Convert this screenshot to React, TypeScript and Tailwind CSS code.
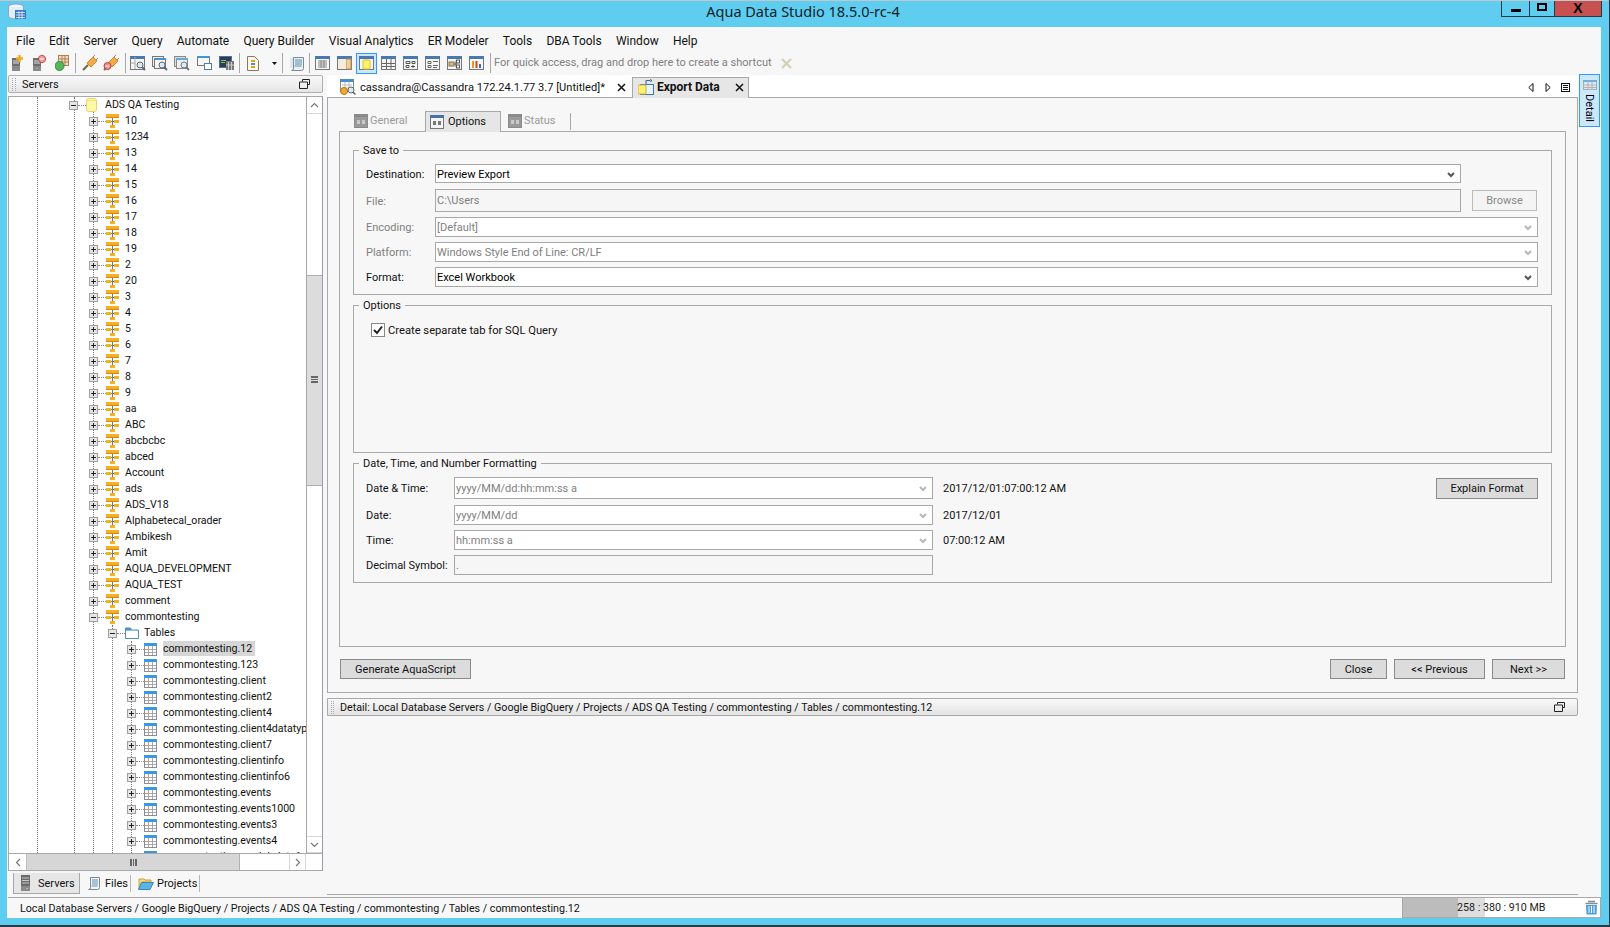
import React from "react";

const Plus = ({ minus = false }: { minus?: boolean }) => (
  <svg width="9" height="9" viewBox="0 0 9 9" className="shrink-0">
    <rect x=".5" y=".5" width="8" height="8" fill="#e6e6e6" stroke="#a0a0a0" />
    <path d="M2 4.5h5" stroke="#222" />
    {!minus && <path d="M4.5 2v5" stroke="#222" />}
  </svg>
);

const GroupIcon = () => (
  <svg width="13" height="14" viewBox="0 0 13 14" className="shrink-0">
    <rect x="0" y="0" width="13" height="4" fill="#f6b21c" />
    <rect x="0" y="3" width="13" height="1" fill="#c98c10" />
    <path d="M6.500 4v7" stroke="#777" />
    <rect x="0" y="6" width="5" height="3" fill="#f6b21c" />
    <rect x="8" y="6" width="5" height="3" fill="#f6b21c" />
    <path d="M5 7.500h3" stroke="#777" />
    <rect x="4" y="11" width="5" height="3" fill="#f6b21c" />
  </svg>
);

const TableIcon = () => (
  <svg width="13" height="13" viewBox="0 0 13 13" className="shrink-0">
    <rect x=".5" y=".5" width="12" height="12" fill="#fff" stroke="#8c8c8c" />
    <rect x="0" y="0" width="13" height="3" fill="#3d97dc" />
    <path d="M4.5 3v9M8.5 3v9M1 6.5h11M1 9.5h11" stroke="#a8a8a8" />
  </svg>
);

const DbIcon = () => (
  <svg width="11" height="14" viewBox="0 0 11 14" className="shrink-0">
    <rect x=".5" y=".5" width="10" height="13" rx="2" fill="#fffaa8" stroke="#edd06a" />
    <path d="M1 2.5h9" stroke="#f6e27a" />
  </svg>
);

const FolderIcon = () => (
  <svg width="14" height="12" viewBox="0 0 14 12" className="shrink-0">
    <path d="M.5 1h5l1 2h7v8.5H.5z" fill="#fff" stroke="#4c91c4" />
    <rect x="1" y="1" width="5" height="2" fill="#4c91c4" />
    <rect x="1" y="3" width="12" height="1" fill="#8dbcdc" />
  </svg>
);

const Chev = ({ off = false }: { off?: boolean }) => (
  <svg width="8" height="6" viewBox="0 0 8 6" className="shrink-0">
    <path d="M1 1l3 3 3-3" fill="none" stroke={off ? "#b8b8b8" : "#555"} strokeWidth="2" />
  </svg>
);

const Win = ({ c = "#4a6ea9", off = false }: { c?: string; off?: boolean }) => (
  <svg width="14" height="14" viewBox="0 0 14 14" className="shrink-0">
    <rect x=".5" y=".5" width="13" height="13" fill={off ? "#9a9a9a" : "#f4f4f4"} stroke={off ? "#8a8a8a" : "#777"} />
    <rect x="0" y="0" width="14" height="3" fill={off ? "#8a8a8a" : c} />
    <rect x="3" y="6" width="3" height="4" fill={off ? "#c8c8c8" : "#777"} />
    <rect x="8" y="6" width="3" height="4" fill={off ? "#c8c8c8" : "#777"} />
  </svg>
);

const Tb = ({ children, w = 16 }: { children: React.ReactNode; w?: number }) => (
  <svg width={w} height="16" viewBox={`0 0 ${w} 16`} className="shrink-0">{children}</svg>
);

const Server = () => (
  <>
    <rect x="0" y="3" width="8" height="13" fill="#6e6e6e" />
    <path d="M1 6h6M1 8h6" stroke="#ddd" />
    <rect x="0" y="11" width="8" height="5" fill="#8a8a8a" />
    <rect x="3" y="13" width="2" height="1" fill="#6fd06f" />
  </>
);

const Frame = ({ top = "#4a78b0" }: { top?: string }) => (
  <>
    <rect x=".5" y="1.5" width="14" height="13" fill="#f6f6f6" stroke="#777" />
    <rect x="0" y="1" width="15" height="3" fill={top} />
  </>
);

const Sep = () => <span className="w-px h-[20px] bg-[#a8a8a8] shrink-0" />;

const Plug = ({ bad = false }: { bad?: boolean }) => (
  <Tb>
    <path d="M1 15l5-5" stroke="#6b6b3a" strokeWidth="2" />
    <path d="M5 8l6-6 4 4-6 6z" fill="#f2a94a" stroke="#d98a2c" />
    <path d="M11 2l2-2M14 5l2-2" stroke="#888" />
    {bad && <circle cx="4.5" cy="11" r="3.5" fill="#ee8c8c" stroke="#c04040" />}
    {bad && <path d="M2.5 11h4" stroke="#fff" />}
  </Tb>
);

const Toolbar = () => (
  <div className="h-[23px] pb-px flex items-center shrink-0">
    <span className="w-[5px] shrink-0" />
    <Tb w={11}>
      <rect x="0" y="3" width="8" height="13" fill="#6e6e6e" />
      <path d="M1 6h6M1 8h6" stroke="#ddd" />
      <rect x="0" y="11" width="8" height="5" fill="#8a8a8a" />
      <path d="M7.5 0v7M4 3.5h7" stroke="#f3a91f" strokeWidth="2.4" />
    </Tb>
    <span className="w-[10px] shrink-0" />
    <Tb w={13}>
      <Server />
      <circle cx="9" cy="4" r="3.6" fill="#f0a0a0" stroke="#c84a4a" />
      <path d="M7 4h4" stroke="#fff" />
    </Tb>
    <span className="w-[9px] shrink-0" />
    <Tb w={14}>
      <rect x="3.5" y=".5" width="10" height="10" fill="#f3dcc4" stroke="#b08050" />
      <path d="M7 1v9M10 1v9M4 4h9M4 7h9" stroke="#b08050" />
      <circle cx="4.5" cy="11" r="4.5" fill="#57b65c" stroke="#3a8a40" />
    </Tb>
    <span className="w-[6px] shrink-0" />
    <Sep />
    <span className="w-[6px] shrink-0" />
    <Plug />
    <span className="w-[5px] shrink-0" />
    <Plug bad />
    <span className="w-[6px] shrink-0" />
    <Sep />
    <span className="w-[4px] shrink-0" />
    <Tb><Frame /><path d="M5 2v12M1 8h4" stroke="#aaa" /><circle cx="10" cy="10" r="3" fill="#d8ecf8" stroke="#666" /><path d="M12 12l3 3" stroke="#666" strokeWidth="2" /></Tb>
    <span className="w-[6px] shrink-0" />
    <Tb><rect x=".5" y="1.5" width="11" height="10" fill="#eee" stroke="#777" /><rect x="2.5" y="3.5" width="11" height="10" fill="#f6f6f6" stroke="#777" /><rect x="2" y="3" width="12" height="2" fill="#4a90c8" /><circle cx="10" cy="10" r="3" fill="#d8ecf8" stroke="#666" /><path d="M12 12l3 3" stroke="#666" strokeWidth="2" /></Tb>
    <span className="w-[6px] shrink-0" />
    <Tb><rect x=".5" y="1.5" width="11" height="10" fill="#ddd" stroke="#888" /><rect x="2.5" y="3.5" width="11" height="10" fill="#eee" stroke="#888" /><rect x="2" y="3" width="12" height="2" fill="#68a8d8" /><circle cx="10" cy="10" r="3" fill="#d8ecf8" stroke="#777" /><path d="M12 12l3 3" stroke="#777" strokeWidth="2" /></Tb>
    <span className="w-[7px] shrink-0" />
    <Tb><rect x=".5" y="1.5" width="12" height="9" fill="#f6f6f6" stroke="#777" /><rect x="0" y="1" width="13" height="2" fill="#3d97dc" /><rect x="7.5" y="8.5" width="7" height="6" fill="#fff" stroke="#4a7fa8" /></Tb>
    <span className="w-[6px] shrink-0" />
    <Tb w={15}><rect x=".5" y="1.5" width="12" height="11" fill="#2f3f4f" stroke="#4a70a8" /><rect x="2" y="5" width="5" height="1" fill="#7ac070" /><rect x="2" y="7" width="4" height="1" fill="#7ac070" /><rect x="7" y="6" width="8" height="9" fill="#777" /><path d="M9.500 7v8M12.500 7v8M7 10h8" stroke="#ccc" /></Tb>
    <span className="w-[5px] shrink-0" />
    <Sep />
    <span className="w-[7px] shrink-0" />
    <Tb w={12}>
      <path d="M.5 1.500h7l4 4v10h-11z" fill="#fbf7ea" stroke="#8a7a5a" />
      <rect x="4" y="5" width="4" height="2" fill="#e0a030" />
      <rect x="4" y="8" width="4" height="2" fill="#4a90c8" />
      <rect x="4" y="11" width="4" height="2" fill="#e0a030" />
    </Tb>
    <span className="w-[13px] shrink-0" />
    <svg width="5" height="3" viewBox="0 0 5 3" className="shrink-0"><path d="M0 0h5L2.500 3z" fill="#111" /></svg>
    <span className="w-[5px] shrink-0" />
    <Sep />
    <span className="w-[7px] shrink-0" />
    <Tb w={15}>
      <path d="M3.500 2.500h10v11a2 2 0 0 1-2 2h-10a2 2 0 0 0 2-2z" fill="#f0eee6" stroke="#7a8a9a" />
      <path d="M5 5h7M5 7h7M5 9h7M4.500 11h7" stroke="#4a90c8" />
      <rect x="0" y="3" width="3" height="10" fill="#dfe8ee" />
    </Tb>
    <span className="w-[4px] shrink-0" />
    <Sep />
    <span className="w-[5px] shrink-0" />
    <Tb>
      <Frame />
      <path d="M3 6h9M3 8h9M3 10h9M3 12h9M6 5v8M9 5v8" stroke="#8a8a8a" />
    </Tb>
    <span className="w-[6px] shrink-0" />
    <Tb>
      <Frame />
      <rect x="9" y="4" width="5" height="10" fill="#f0cf9a" stroke="#b88c50" />
      <rect x="1" y="4" width="8" height="10" fill="#f6ead8" />
    </Tb>
    <span className="w-[3px] shrink-0" />
    <span className="w-[21px] h-[21px] shrink-0 bg-[#cce8ff] border border-[#3399ff] flex items-center justify-center">
      <Tb>
        <Frame />
        <rect x="4" y="5" width="7" height="9" rx="1" fill="#fff36e" stroke="#d8c040" />
      </Tb>
    </span>
    <span className="w-[4px] shrink-0" />
    <Tb>
      <Frame />
      <path d="M1 8.500h13M1 11.500h13M5.500 4v10M10 4v10" stroke="#666" />
    </Tb>
    <span className="w-[6px] shrink-0" />
    <Tb>
      <Frame />
      <path d="M3 6.500h4v2H3zM9 6.500h3v2H9zM3 10.500h3v2H3zM8 11.500h4M10 10v3" fill="none" stroke="#555" />
    </Tb>
    <span className="w-[6px] shrink-0" />
    <Tb>
      <Frame />
      <path d="M3 6.500h3v2H3zM8 6.500h5M3 10.500h3v2H3zM8 10.500h5M8 12.500h4" fill="none" stroke="#666" />
    </Tb>
    <span className="w-[6px] shrink-0" />
    <Tb>
      <Frame />
      <rect x="2" y="7" width="5" height="4" fill="#e8b860" stroke="#777" />
      <path d="M7 9h2M9 6v6" stroke="#555" />
      <rect x="9.500" y="5" width="3" height="3" fill="#fff" stroke="#555" />
      <rect x="9.500" y="10" width="3" height="3" fill="#fff" stroke="#555" />
    </Tb>
    <span className="w-[6px] shrink-0" />
    <Tb>
      <Frame />
      <rect x="3" y="6" width="2" height="7" fill="#d8a020" />
      <rect x="6.500" y="6" width="2" height="7" fill="#d04030" />
      <rect x="10" y="9" width="2" height="4" fill="#3070c0" />
    </Tb>
    <span className="w-[5px] shrink-0" />
    <Sep />
    <span className="w-[3px] shrink-0" />
    <span className="text-[#808080] whitespace-nowrap">For quick access, drag and drop here to create a shortcut</span>
    <svg width="11" height="11" viewBox="0 0 11 11" className="ml-[9px] shrink-0"><path d="M1 1l9 9M10 1l-9 9" stroke="#d5d0b8" strokeWidth="2.400" /></svg>
  </div>
);

type Row = { n: string; kind: "db" | "grp" | "folder" | "tbl"; open?: boolean; sel?: boolean };

const groups = ["10","1234","13","14","15","16","17","18","19","2","20","3","4","5","6","7","8","9","aa","ABC","abcbcbc","abced","Account","ads","ADS_V18","Alphabetecal_orader","Ambikesh","Amit","AQUA_DEVELOPMENT","AQUA_TEST","comment"];
const tables = ["commontesting.12","commontesting.123","commontesting.client","commontesting.client2","commontesting.client4","commontesting.client4datatype","commontesting.client7","commontesting.clientinfo","commontesting.clientinfo6","commontesting.events","commontesting.events1000","commontesting.events3","commontesting.events4","commontesting.model_data1"];

const rows: Row[] = [
  { n: "ADS QA Testing", kind: "db", open: true },
  ...groups.map((n): Row => ({ n, kind: "grp" })),
  { n: "commontesting", kind: "grp", open: true },
  { n: "Tables", kind: "folder", open: true },
  ...tables.map((n, i): Row => ({ n, kind: "tbl", sel: i === 0 })),
];

const indent = { db: "pl-[60px]", grp: "pl-[80px]", folder: "pl-[99px]", tbl: "pl-[118px]" };

const TreeRow = ({ r }: { r: Row }) => (
  <div className={`h-4 flex items-center relative whitespace-nowrap ${indent[r.kind]}`}>
    <Plus minus={r.open} />
    <span className="w-[8px] shrink-0 border-t border-dotted border-[#888]" />
    <span className={r.kind === "db" ? "w-[11px] flex shrink-0" : "w-[14px] flex shrink-0"}>
      {r.kind === "db" && <DbIcon />}
      {r.kind === "grp" && <GroupIcon />}
      {r.kind === "folder" && <FolderIcon />}
      {r.kind === "tbl" && <TableIcon />}
    </span>
    <span className={r.kind === "db" ? "ml-[8px]" : "ml-[5px]"}>
      <span className={r.sel ? "bg-[#d6d6d6] inline-block leading-[15px] pr-[3px]" : ""}>{r.n}</span>
    </span>
  </div>
);

const Guide = ({ cls }: { cls: string }) => (
  <span className={`absolute border-l border-dotted border-[#777] w-0 ${cls}`} />
);

const Tree = () => (
  <div className="h-[775px] border border-[#a8a8a8] border-r-[#9a9ab0] flex flex-col bg-white mt-[3px] text-[10.6px]">
    <div className="flex-1 flex min-h-0">
      <div className="flex-1 relative overflow-hidden bg-white min-w-0">
        <Guide cls="left-[28px] top-0 bottom-0" />
        <Guide cls="left-[65px] top-0 bottom-0" />
        <Guide cls="left-[84px] top-[12px] bottom-0" />
        <Guide cls="left-[103px] top-[528px] bottom-0" />
        <Guide cls="left-[122px] top-[544px] bottom-0" />
        <div className="relative">
          {rows.map((r) => <TreeRow key={r.n} r={r} />)}
        </div>
      </div>
      <div className="w-[16px] shrink-0 flex flex-col border-l border-[#a8a8a8] bg-white">
        <div className="h-[17px] flex items-center justify-center border-b border-[#d8d8d8] bg-white">
          <svg width="9" height="6" viewBox="0 0 9 6"><path d="M1 5l3.500-3.500L8 5" fill="none" stroke="#777" strokeWidth="1.200" /></svg>
        </div>
        <div className="h-[161px]" />
        <div className="h-[211px] bg-[#dcdcdc] border-t border-[#b0b0b0] border-b flex items-center justify-center">
          <div className="w-[7px] h-[7px] border-y-2 border-[#666] flex items-center -mt-[2px]"><div className="w-full h-px bg-[#666]" /></div>
        </div>
        <div className="flex-1" />
        <div className="h-[17px] flex items-center justify-center border-y border-[#d8d8d8] bg-white">
          <svg width="9" height="6" viewBox="0 0 9 6"><path d="M1 1l3.500 3.500L8 1" fill="none" stroke="#777" strokeWidth="1.200" /></svg>
        </div>
      </div>
    </div>
    <div className="h-[17px] shrink-0 flex border-t border-[#a8a8a8]">
      <div className="w-[18px] flex items-center justify-center border-r border-[#c0c0c0]">
        <svg width="6" height="9" viewBox="0 0 6 9"><path d="M5 1L1.500 4.500 5 8" fill="none" stroke="#777" strokeWidth="1.200" /></svg>
      </div>
      <div className="w-[213px] bg-[#d6d6d6] flex items-center justify-center border-r border-[#b0b0b0]">
        <div className="w-[7px] h-[7px] border-x-2 border-[#666] flex justify-center"><div className="h-full w-px bg-[#666]" /></div>
      </div>
      <div className="w-[49px]" />
      <div className="w-[17px] flex items-center justify-center border-x border-[#d8d8d8]">
        <svg width="6" height="9" viewBox="0 0 6 9"><path d="M1 1l3.500 3.500L1 8" fill="none" stroke="#777" strokeWidth="1.200" /></svg>
      </div>
      <div className="flex-1" />
    </div>
  </div>
);

const SidePane = () => (
  <div className="w-[315px] shrink-0 flex flex-col">
    <div className="h-[18px] border border-[#b0b0b0] rounded-[2px] bg-gradient-to-b from-[#f8f8f8] to-[#e6e6e6] flex items-center">
      <span className="w-[4px] h-[13px] ml-[3px] border-x border-dotted border-[#aaa]" />
      <span className="ml-[6px] mt-[2px]">Servers</span>
      <svg width="11" height="10" viewBox="0 0 11 10" className="ml-auto mr-[12px]"><path d="M3.500 2.500V.5h7v5h-2M.5 3h8v6.500h-8z" fill="none" stroke="#222" /></svg>
    </div>
    <Tree />
    <div className="h-[23px] flex items-stretch pl-[5px] pt-[2px]">
      <div className="w-[67px] bg-[#e6e6e6] border border-t-0 border-[#a8a8a8] border-l-[#a8a8a8] flex items-center pl-[7px]">
        <svg width="9" height="16" viewBox="0 0 9 16" className="shrink-0">
          <rect width="9" height="16" fill="#6b6b6b" />
          <path d="M1 3h7M1 5.500h7M1 8h7" stroke="#c8c8c8" />
          <rect x="0" y="11" width="9" height="5" fill="#8a8a8a" /><rect x="5" y="13" width="2" height="1" fill="#7fe07f" />
        </svg>
        <span className="ml-[8px] mt-[1px]">Servers</span>
      </div>
      <div className="flex items-center pl-[7px] w-[51px] border-r border-[#b8b8b8] my-[2px]">
        <svg width="14" height="15" viewBox="0 0 14 15" className="shrink-0">
          <path d="M3.500 1.500h9v10a2 2 0 0 1-2 2h-9a2 2 0 0 0 2-2z" fill="#f4f4f4" stroke="#7c8a96" />
          <path d="M5 4h6M5 6h6M5 8h6M4.500 10h6" stroke="#5c8fb8" />
        </svg>
        <span className="ml-[4px] mt-[1px]">Files</span>
      </div>
      <div className="flex items-center pl-[7px] w-[69px] border-r border-[#b8b8b8] my-[2px]">
        <svg width="16" height="13" viewBox="0 0 16 13" className="shrink-0">
          <path d="M1 2h5l1 1h6v2H4L1 12z" fill="#f6d878" stroke="#c8a040" />
          <path d="M3.500 5.500h12L12 12.500H.5z" fill="#5cb4e4" stroke="#3a88b8" />
        </svg>
        <span className="ml-[3px] mt-[1px]">Projects</span>
      </div>
    </div>
  </div>
);

const fieldCls = "h-full border border-[#a8a8a8] flex items-center pl-px pr-[5px] pt-[2px] whitespace-nowrap min-w-0";

const Combo = ({ value, off = false, w, extra = "" }: { value: string; off?: boolean; w?: string; extra?: string }) => (
  <div className={`${fieldCls} bg-white justify-between ${w ?? "flex-1"} ${extra}`}>
    <span className={off ? "text-[#808080]" : "text-black"}>{value}</span>
    <Chev off={off} />
  </div>
);

const Field = ({ value, w, extra = "" }: { value: string; w?: string; extra?: string }) => (
  <div className={`${fieldCls} bg-[#f6f6f6] text-[#808080] ${w ?? "flex-1"} ${extra}`}>{value}</div>
);

const SaveRow = ({ label, off = false, h, children }: { label: string; off?: boolean; h: string; children: React.ReactNode }) => (
  <div className={`flex items-center ${h}`}>
    <span className={`w-[69px] shrink-0 mt-[2px] ${off ? "text-[#808080]" : ""}`}>{label}</span>
    {children}
  </div>
);

const Legend = ({ children }: { children: React.ReactNode }) => (
  <legend className="ml-[5px] px-[4px] leading-[16px] h-[14px] text-[#111]">{children}</legend>
);

const Btn = ({ children, w }: { children: React.ReactNode; w: string }) => (
  <button className={`h-[20px] ${w} bg-[#dcdcdc] border border-[#8a8a8a] flex items-center justify-center pt-[2px] text-[#111]`}>{children}</button>
);

const DateRow = ({ label, h, children, after }: { label: string; h: string; children: React.ReactNode; after?: React.ReactNode }) => (
  <div className={`flex items-center ${h}`}>
    <span className="w-[88px] shrink-0 whitespace-nowrap mt-[2px]">{label}</span>
    {children}
    {after}
  </div>
);

const ExportForm = () => (
  <div className="mx-[11px] h-[516px] border border-[#a8a8a8] px-[13px] pt-[11px] flex flex-col">
    <fieldset className="border border-[#a8a8a8] min-w-0">
      <Legend>Save to</Legend>
      <div className="flex flex-col pt-[7px] pb-[7px] pl-[12px] pr-[13px] gap-[5px]">
        <SaveRow label="Destination:" h="h-[19px]">
          <Combo value="Preview Export" w="w-[1026px]" />
        </SaveRow>
        <SaveRow label="File:" off h="h-[23px] mt-px">
          <Field value="C:\Users" w="w-[1026px]" extra="pb-[2px]" />
          <button className="ml-[11px] w-[65px] h-[21px] bg-[#f4f4f4] border border-[#bbb] text-[#888] pt-px">Browse</button>
        </SaveRow>
        <SaveRow label="Encoding:" off h="h-[20px]"><Combo value="[Default]" off /></SaveRow>
        <SaveRow label="Platform:" off h="h-[20px]"><Combo value="Windows Style End of Line: CR/LF" off /></SaveRow>
        <SaveRow label="Format:" h="h-[20px]"><Combo value="Excel Workbook" /></SaveRow>
      </div>
    </fieldset>
    <fieldset className="mt-[3px] border border-[#a8a8a8] min-w-0">
      <Legend>Options</Legend>
      <div className="h-[140px] pt-[9px] pl-[17px] flex items-start">
        <label className="flex items-center">
          <svg width="14" height="14" viewBox="0 0 14 14" className="shrink-0">
            <rect x=".5" y=".5" width="13" height="13" fill="#fff" stroke="#888" />
            <path d="M3 7l3 3 5-6.500" fill="none" stroke="#222" strokeWidth="2" />
          </svg>
          <span className="ml-[3px] mt-[2px] text-[11.2px]">Create separate tab for SQL Query</span>
        </label>
      </div>
    </fieldset>
    <fieldset className="mt-[3px] border border-[#a8a8a8] min-w-0">
      <Legend>Date, Time, and Number Formatting</Legend>
      <div className="flex flex-col pt-[7px] pb-[7px] pl-[12px] pr-[13px] gap-[5px]">
        <DateRow
          label="Date & Time:"
          h="h-[22px] mb-px"
          after={
            <>
              <span className="ml-[10px] mt-[2px] whitespace-nowrap">2017/12/01:07:00:12 AM</span>
              <button className="ml-auto w-[102px] h-[21px] bg-[#dcdcdc] border border-[#8a8a8a] text-[#111] pt-px">Explain Format</button>
            </>
          }
        >
          <Combo value="yyyy/MM/dd:hh:mm:ss a" off w="w-[479px]" extra="shrink-0" />
        </DateRow>
        <DateRow label="Date:" h="h-[20px]" after={<span className="ml-[10px] mt-[2px]">2017/12/01</span>}>
          <Combo value="yyyy/MM/dd" off w="w-[479px]" extra="shrink-0" />
        </DateRow>
        <DateRow label="Time:" h="h-[20px]" after={<span className="ml-[10px] mt-[2px]">07:00:12 AM</span>}>
          <Combo value="hh:mm:ss a" off w="w-[479px]" extra="shrink-0" />
        </DateRow>
        <DateRow label="Decimal Symbol:" h="h-[20px]">
          <Field value="." w="w-[479px]" extra="shrink-0" />
        </DateRow>
      </div>
    </fieldset>
  </div>
);

const TabBar = () => (
  <div className="h-[22px] bg-white border-b border-[#a8a8a8] flex items-end shrink-0 box-content">
    <div className="h-[20px] flex items-center whitespace-nowrap">
      <span className="w-[13px]" />
      <svg width="16" height="16" viewBox="0 0 16 16" className="shrink-0">
        <rect x=".5" y=".5" width="13" height="12" fill="#fff" stroke="#888" />
        <rect x="0" y="0" width="14" height="3" fill="#4a90c8" />
        <path d="M2 6h10M2 9h10M5 3v9M9 3v9" stroke="#bbb" />
        <circle cx="4" cy="12" r="3.500" fill="#f0a830" stroke="#b87818" />
        <circle cx="11" cy="11" r="3" fill="#d8ecf8" stroke="#666" />
        <path d="M13 13l2.500 2.500" stroke="#666" strokeWidth="1.500" />
      </svg>
      <span className="ml-[4px] mt-[2px] text-[11.1px]">cassandra@Cassandra 172.24.1.77 3.7 [Untitled]*</span>
      <svg width="9" height="9" viewBox="0 0 9 9" className="ml-[12px] shrink-0"><path d="M1 1l7 7M8 1L1 8" stroke="#111" strokeWidth="1.500" /></svg>
      <span className="w-[5px]" />
    </div>
    <div className="ml-[1px] h-[21px] w-[117px] bg-[#e6e6e6] border border-b-0 border-[#a8a8a8] flex items-center pl-[5px] pb-[2px] -mb-px">
      <svg width="16" height="16" viewBox="0 0 16 16" className="shrink-0">
        <rect x="2.500" y="5.500" width="13" height="10" fill="#e8f2fa" stroke="#3a78b8" />
        <rect x="0" y="6" width="8" height="9" rx="1" fill="#fff070" stroke="#d0b040" />
        <path d="M8 5V1.500M8 1.500h4M12 .5l2 1-2 1" fill="none" stroke="#2a68a8" />
      </svg>
      <b className="ml-[3px] font-bold whitespace-nowrap text-[12px]">Export Data</b>
      <svg width="9" height="9" viewBox="0 0 9 9" className="ml-auto mr-[4px] shrink-0"><path d="M1 1l7 7M8 1L1 8" stroke="#111" strokeWidth="1.500" /></svg>
    </div>
    <div className="ml-auto mr-[8px] h-[20px] flex items-center gap-[10px]">
      <svg width="6" height="9" viewBox="0 0 6 9"><path d="M5 .5v8L.8 4.500z" fill="none" stroke="#111" /></svg>
      <svg width="6" height="9" viewBox="0 0 6 9" className="ml-[1px]"><path d="M1 .5v8l4.200-4z" fill="none" stroke="#111" /></svg>
      <svg width="9" height="9" viewBox="0 0 9 9"><rect x=".5" y=".5" width="8" height="8" fill="none" stroke="#111" /><path d="M2 2.500h5M2 4.500h5M2 6.500h5" stroke="#111" /></svg>
    </div>
  </div>
);

const InnerTabs = () => (
  <div className="h-[33px] shrink-0 flex items-end pl-[26px] relative">
    <div className="h-[20px] flex items-center w-[71px] text-[#9a9a9a]">
      <Win off />
      <span className="ml-[2px]">General</span>
    </div>
    <div className="h-[21px] w-[76px] bg-[#e6e6e6] border border-b-0 border-[#a8a8a8] flex items-center pl-[4px] -mb-px relative">
      <Win />
      <span className="ml-[4px]">Options</span>
    </div>
    <div className="h-[20px] flex items-center pl-[7px] w-[70px] text-[#9a9a9a] relative">
      <Win off />
      <span className="ml-[2px]">Status</span>
      <span className="ml-auto w-px h-[17px] bg-[#a8a8a8]" />
    </div>
  </div>
);

const Main = () => (
  <div className="flex-1 flex min-w-0">
    <div className="flex-1 flex flex-col min-w-0">
      <TabBar />
      <div className="h-[595px] border-x border-b border-[#a8a8a8] flex flex-col shrink-0">
        <InnerTabs />
        <ExportForm />
        <div className="flex px-[12px] pt-[12px] gap-[7px]">
          <Btn w="w-[131px]">Generate AquaScript</Btn>
          <span className="flex-1" />
          <Btn w="w-[57px]">Close</Btn>
          <Btn w="w-[91px]">&lt;&lt; Previous</Btn>
          <Btn w="w-[73px]">Next &gt;&gt;</Btn>
        </div>
      </div>
      <div className="mt-[5px] h-[18px] border border-[#a8a8a8] rounded-r-[2px] bg-gradient-to-b from-[#f8f8f8] to-[#e4e4e4] flex items-center pl-[3px] shrink-0 text-[10.7px]">
        <span className="w-[3px] h-[13px] border-x border-dotted border-[#aaa]" />
        <span className="ml-[6px] mt-[2px] whitespace-nowrap">Detail: Local Database Servers / Google BigQuery / Projects / ADS QA Testing / commontesting / Tables / commontesting.12</span>
        <svg width="11" height="10" viewBox="0 0 11 10" className="ml-auto mr-[12px] shrink-0"><path d="M3.500 2.500V.5h7v5h-2M.5 3h8v6.500h-8z" fill="none" stroke="#222" /></svg>
      </div>
      <div className="flex-1 border-b border-[#a8a8a8] mb-[2px]" />
    </div>
    <div className="w-[23px] shrink-0 pl-[1px] -mt-px">
      <div className="w-[21px] h-[53px] bg-[#cce8ff] border border-[#3399ff] flex flex-col items-center pt-[5px]">
        <svg width="14" height="10" viewBox="0 0 14 10" className="shrink-0">
          <rect x=".5" y=".5" width="13" height="9" fill="#dceaf5" stroke="#a0b0c0" />
          <rect x="0" y="0" width="14" height="2" fill="#7aaed8" />
          <path d="M5 2v8M9 2v8M1 5h12M1 7.500h12" stroke="#b4b4b4" />
        </svg>
        <span className="mt-[4px] [writing-mode:vertical-rl] leading-none text-black">Detail</span>
      </div>
    </div>
  </div>
);

const Status = () => (
  <div className="h-[21px] shrink-0 flex text-[10.7px]">
    <div className="flex-1 border-t border-[#a8a8a8] flex items-center pl-[12px] pt-[2px] whitespace-nowrap ml-px min-w-0">
      Local Database Servers / Google BigQuery / Projects / ADS QA Testing / commontesting / Tables / commontesting.12
    </div>
    <div className="w-[199px] shrink-0 border border-[#a8a8a8] bg-white flex items-stretch">
      <div className="w-[55px] bg-[#bcbcbc]" />
      <div className="flex-1 flex items-center relative pr-[2px]">
        <div className="w-[27px] self-stretch bg-[#dedede]" />
        <span className="absolute -left-[1px] top-[2px] whitespace-nowrap text-[#222]">258 : 380 : 910 MB</span>
        <svg width="13" height="15" viewBox="0 0 13 15" className="ml-auto shrink-0">
          <path d="M3 1.500h7M.5 3.500h12" stroke="#8a8a8a" strokeWidth="1.500" />
          <path d="M1 5h11l-.5 9.500h-10z" fill="#4aa0d8" />
          <path d="M4 6v7M6.500 6v7M9 6v7" stroke="#fff" />
        </svg>
      </div>
    </div>
  </div>
);

const Title = () => (
  <div className="h-[27px] shrink-0 flex items-start relative border-t border-[#c0c8cc]">
    <svg width="18" height="18" viewBox="0 0 18 18" className="ml-[8px] mt-[2px] shrink-0">
      <ellipse cx="8" cy="4" rx="7.500" ry="3" fill="#f2f8fc" stroke="#8aa8c8" />
      <path d="M.5 4v9c0 1.700 3.400 3 7.500 3s7.500-1.300 7.500-3V4" fill="#e4eef6" stroke="#8aa8c8" />
      <rect x="7" y="7" width="11" height="9" fill="#3a78c8" />
      <path d="M8 9.500h9M8 12h9M8 14.500h9M11 8v8M14 8v8" stroke="#fff" strokeWidth=".7" />
    </svg>
    <div className="flex-1 text-center text-[14.5px] leading-[20px] text-[#10222a] font-['Noto_Sans',sans-serif] pl-[79px]">Aqua Data Studio 18.5.0-rc-4</div>
    <div className="flex h-[16px] mr-[7px] shrink-0 border border-t-0 border-[#2a3a44]">
      <div className="w-[28px] border-r border-[#2a3a44] flex items-end justify-center pb-[4px]"><span className="w-[10px] h-[3px] bg-black" /></div>
      <div className="w-[25px] border-r border-[#2a3a44] flex justify-center pt-[2px]"><span className="w-[10px] h-[8px] border-2 border-black" /></div>
      <div className="w-[46px] bg-[#c75050] flex justify-center text-[14px] leading-[14px] font-bold text-black font-['Liberation_Sans',sans-serif]">X</div>
    </div>
  </div>
);

export default function App() {
  return (
    <div className="w-[1610px] h-[927px] bg-[#5fcdf0] flex flex-col overflow-hidden text-[11px] leading-[16px] text-[#111] font-['Roboto',Arial,sans-serif] border-r border-b-2 border-[#2a3a44]">
      <Title />
      <div className="h-[891px] ml-[7px] mr-[8px] bg-[#f7f7f7] flex flex-col shrink-0">
        <div className="h-[25px] flex items-center shrink-0 pl-[9px] gap-x-[14.2px] pt-[2px] whitespace-nowrap text-[12px]">
          <span>File</span><span>Edit</span><span>Server</span><span>Query</span><span>Automate</span><span>Query Builder</span><span>Visual Analytics</span><span>ER Modeler</span><span>Tools</span><span>DBA Tools</span><span>Window</span><span>Help</span>
        </div>
        <Toolbar />
        <div className="flex-1 flex pl-px gap-[4px] min-h-0">
          <SidePane />
          <Main />
        </div>
        <Status />
      </div>
    </div>
  );
}
